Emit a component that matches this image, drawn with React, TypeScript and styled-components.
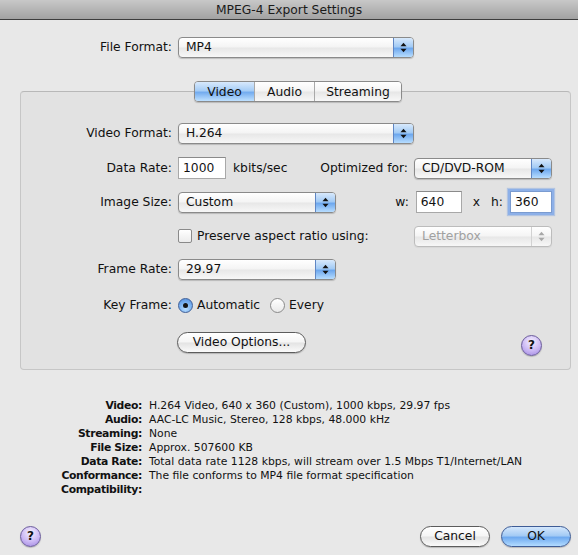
import React from "react";
import styled, { createGlobalStyle, css } from "styled-components";

const Global = createGlobalStyle`
  html, body { margin: 0; padding: 0; background: #e8e8e8; }
  body {
    font-family: "DejaVu Sans", "Liberation Sans", sans-serif;
    font-size: 12.3px;
    color: #111;
  }
  #root { width: 578px; height: 555px; overflow: hidden; }
`;

const Window = styled.div`
  width: 578px;
  height: 555px;
  display: flex;
  flex-direction: column;
  background: #e8e8e8;
`;

const TitleBar = styled.div`
  height: 19px;
  border-bottom: 1px solid #3d3d3d;
  background: linear-gradient(#c8c8c8, #a2a2a2);
  display: flex;
  align-items: center;
  justify-content: center;
  font-size: 12.3px;
  color: #1a1a1a;
`;

const Row = styled.div<{ $top: number }>`
  display: flex;
  align-items: center;
  height: 22px;
  margin-top: ${(p) => p.$top}px;
`;

const Label = styled.span<{ $w: number }>`
  width: ${(p) => p.$w}px;
  flex-shrink: 0;
  text-align: right;
  margin-right: 6px;
  white-space: nowrap;
`;

const Text = styled.span<{ $ml?: number; $mr?: number }>`
  white-space: nowrap;
  margin-left: ${(p) => p.$ml ?? 0}px;
  margin-right: ${(p) => p.$mr ?? 0}px;
`;

const RightGroup = styled.div`
  margin-left: auto;
  display: flex;
  align-items: center;
`;

/* Popup button */
const PopupBox = styled.div<{ $w: number; $disabled?: boolean }>`
  box-sizing: border-box;
  width: ${(p) => p.$w}px;
  height: 21px;
  display: flex;
  border: 1px solid ${(p) => (p.$disabled ? "#bcbcbc" : "#8a8a8a")};
  border-radius: 4px;
  overflow: hidden;
  background: linear-gradient(#ffffff, #f4f4f4 48%, #e7e7e7 52%, #f7f7f7);
  box-shadow: 0 1px 1px rgba(0, 0, 0, ${(p) => (p.$disabled ? 0.05 : 0.18)});
  color: ${(p) => (p.$disabled ? "#a0a0a0" : "#111")};
`;

const PopupValue = styled.span`
  flex: 1;
  padding-left: 7px;
  display: flex;
  align-items: center;
  white-space: nowrap;
`;

const PopupArrows = styled.span<{ $disabled?: boolean }>`
  width: 19px;
  flex-shrink: 0;
  display: flex;
  align-items: center;
  justify-content: center;
  ${(p) =>
    p.$disabled
      ? css`
          border-left: 1px solid #d2d2d2;
        `
      : css`
          border-left: 1px solid #5f86c4;
          background: linear-gradient(#d8e9fc, #a3cbf5 45%, #6ea8ee 55%, #b7ddff);
        `}
`;

const Arrows = ({ color }: { color: string }) => (
  <svg width="7" height="11" viewBox="0 0 7 11">
    <polygon points="3.5,0.8 6.5,4.3 0.5,4.3" fill={color} />
    <polygon points="0.5,6.7 6.5,6.7 3.5,10.2" fill={color} />
  </svg>
);

const Popup = ({ w, value, disabled }: { w: number; value: string; disabled?: boolean }) => (
  <PopupBox $w={w} $disabled={disabled}>
    <PopupValue>{value}</PopupValue>
    <PopupArrows $disabled={disabled}>
      <Arrows color={disabled ? "#a8a8a8" : "#111"} />
    </PopupArrows>
  </PopupBox>
);

/* Text field */
const Field = styled.div<{ $w: number; $focus?: boolean }>`
  box-sizing: border-box;
  width: ${(p) => p.$w}px;
  height: 22px;
  background: #fff;
  border: 1px solid #a8a8a8;
  border-top-color: #8a8a8a;
  padding: 0 4px;
  display: flex;
  align-items: center;
  flex-shrink: 0;
  ${(p) =>
    p.$focus &&
    css`
      border-color: #7a9bd0;
      box-shadow: 0 0 0 2px #8db0e8, 0 0 1px 3px rgba(120, 160, 225, 0.45);
    `}
`;

/* Tabs */
const TabBar = styled.div`
  position: relative;
  z-index: 1;
  align-self: center;
  display: flex;
  height: 21px;
  box-sizing: border-box;
  border: 1px solid #8a8a8a;
  border-radius: 4px;
  overflow: hidden;
  margin-top: 23px;
  margin-left: 18px;
  box-shadow: 0 1px 1px rgba(0, 0, 0, 0.18);
`;

const Tab = styled.div<{ $w: number; $active?: boolean }>`
  width: ${(p) => p.$w}px;
  display: flex;
  align-items: center;
  justify-content: center;
  border-left: 1px solid #a9a9a9;
  &:first-child { border-left: none; }
  background: ${(p) =>
    p.$active
      ? "linear-gradient(#d8e9fc, #a6cdf6 45%, #74acef 55%, #bfe1ff)"
      : "linear-gradient(#ffffff, #f4f4f4 48%, #e6e6e6 52%, #f8f8f8)"};
`;

const GroupBox = styled.div`
  margin: -11px 7px 0 20px;
  border: 1px solid #c6c6c6;
  border-top-color: #b8b8b8;
  border-radius: 4px;
  background: #e2e2e2;
  padding: 30px 18px 16px 0;
  display: flex;
  flex-direction: column;
`;

/* Checkbox & radio */
const CheckBox = styled.span`
  box-sizing: border-box;
  width: 14px;
  height: 14px;
  border: 1px solid #8a8a8a;
  border-radius: 2px;
  background: linear-gradient(#ffffff, #ececec);
  margin-right: 5px;
  flex-shrink: 0;
`;

const Radio = styled.span<{ $on?: boolean }>`
  box-sizing: border-box;
  width: 15px;
  height: 15px;
  border-radius: 50%;
  margin-right: 4px;
  flex-shrink: 0;
  display: flex;
  align-items: center;
  justify-content: center;
  border: 1px solid ${(p) => (p.$on ? "#3f5f98" : "#8a8a8a")};
  background: ${(p) =>
    p.$on
      ? "radial-gradient(circle at 50% 75%, #b9defe, #77b0f1 55%, #4d88d8)"
      : "linear-gradient(#ffffff, #e9e9e9)"};
  &::after {
    content: "";
    display: ${(p) => (p.$on ? "block" : "none")};
    width: 5px;
    height: 5px;
    border-radius: 50%;
    background: #151515;
  }
`;

/* Buttons */
const PushButton = styled.div<{ $w: number; $default?: boolean; $mr?: number }>`
  box-sizing: border-box;
  width: ${(p) => p.$w}px;
  height: 21px;
  border-radius: 11px;
  display: flex;
  align-items: center;
  justify-content: center;
  flex-shrink: 0;
  margin-right: ${(p) => p.$mr ?? 0}px;
  box-shadow: 0 1px 1px rgba(0, 0, 0, 0.2);
  border: 1px solid ${(p) => (p.$default ? "#3e5c96" : "#5c5c5c")};
  background: ${(p) =>
    p.$default
      ? "linear-gradient(#d4e7fc, #a4cbf5 45%, #6faaf0 55%, #b2dbff)"
      : "linear-gradient(#ffffff, #f5f5f5 48%, #e3e3e3 52%, #fafafa)"};
`;

const HelpButton = styled.div<{ $mt?: number; $mr?: number }>`
  box-sizing: border-box;
  width: 21px;
  height: 21px;
  border-radius: 50%;
  flex-shrink: 0;
  border: 1px solid #6b5c9c;
  background: radial-gradient(circle at 50% 30%, #f6f1ff, #cbb8f4 55%, #9d84df);
  box-shadow: 0 1px 1px rgba(0, 0, 0, 0.2);
  display: flex;
  align-items: center;
  justify-content: center;
  font-weight: bold;
  font-size: 12px;
  color: #111;
  margin-top: ${(p) => p.$mt ?? 0}px;
  margin-right: ${(p) => p.$mr ?? 0}px;
`;

/* Summary */
const Summary = styled.div`
  margin-top: 29px;
  display: grid;
  grid-template-columns: 142px 1fr;
  column-gap: 7px;
  font-size: 10.8px;
  line-height: 14px;
`;

const SumLabel = styled.span`
  text-align: right;
  font-weight: bold;
  letter-spacing: -0.35px;
  white-space: nowrap;
`;

const SumValue = styled.span`
  white-space: nowrap;
`;

const BottomBar = styled.div`
  margin-top: 28px;
  padding: 0 7px 0 20px;
  display: flex;
  align-items: center;
  height: 22px;
`;

const Spacer = styled.div`
  flex: 1;
`;

const summary: [string, string][] = [
  ["Video:", "H.264 Video, 640 x 360 (Custom), 1000 kbps, 29.97 fps"],
  ["Audio:", "AAC-LC Music, Stereo, 128 kbps, 48.000 kHz"],
  ["Streaming:", "None"],
  ["File Size:", "Approx. 507600 KB"],
  ["Data Rate:", "Total data rate 1128 kbps, will stream over 1.5 Mbps T1/Internet/LAN"],
  ["Conformance:", "The file conforms to MP4 file format specification"],
  ["Compatibility:", ""],
];

export default function App() {
  return (
    <Window>
      <Global />
      <TitleBar>MPEG-4 Export Settings</TitleBar>

      <Row $top={16}>
        <Label $w={172}>File Format:</Label>
        <Popup w={236} value="MP4" />
      </Row>

      <TabBar>
        <Tab $w={59} $active>Video</Tab>
        <Tab $w={59}>Audio</Tab>
        <Tab $w={86}>Streaming</Tab>
      </TabBar>

      <GroupBox>
        <Row $top={0}>
          <Label $w={151}>Video Format:</Label>
          <Popup w={236} value="H.264" />
        </Row>

        <Row $top={13}>
          <Label $w={151}>Data Rate:</Label>
          <Field $w={48}>1000</Field>
          <Text $ml={7}>kbits/sec</Text>
          <RightGroup>
            <Text $mr={6}>Optimized for:</Text>
            <Popup w={138} value="CD/DVD-ROM" />
          </RightGroup>
        </Row>

        <Row $top={12}>
          <Label $w={151}>Image Size:</Label>
          <Popup w={158} value="Custom" />
          <RightGroup>
            <Text $mr={7}>w:</Text>
            <Field $w={46}>640</Field>
            <Text $ml={11} $mr={11}>x</Text>
            <Text $mr={7}>h:</Text>
            <Field $w={42} $focus>360</Field>
          </RightGroup>
        </Row>

        <Row $top={12}>
          <Label $w={151} />
          <CheckBox />
          <Text>Preserve aspect ratio using:</Text>
          <RightGroup>
            <Popup w={138} value="Letterbox" disabled />
          </RightGroup>
        </Row>

        <Row $top={11}>
          <Label $w={151}>Frame Rate:</Label>
          <Popup w={158} value="29.97" />
        </Row>

        <Row $top={14}>
          <Label $w={151}>Key Frame:</Label>
          <Radio $on />
          <Text $mr={10}>Automatic</Text>
          <Radio />
          <Text>Every</Text>
        </Row>

        <Row $top={15}>
          <Label $w={150} />
          <PushButton $w={129}>Video Options...</PushButton>
          <RightGroup>
            <HelpButton $mt={6} $mr={10}>?</HelpButton>
          </RightGroup>
        </Row>
      </GroupBox>

      <Summary>
        {summary.map(([k, v]) => (
          <React.Fragment key={k}>
            <SumLabel>{k}</SumLabel>
            <SumValue>{v}</SumValue>
          </React.Fragment>
        ))}
      </Summary>

      <BottomBar>
        <HelpButton>?</HelpButton>
        <Spacer />
        <PushButton $w={70} $mr={11}>Cancel</PushButton>
        <PushButton $w={70} $default>OK</PushButton>
      </BottomBar>
    </Window>
  );
}
